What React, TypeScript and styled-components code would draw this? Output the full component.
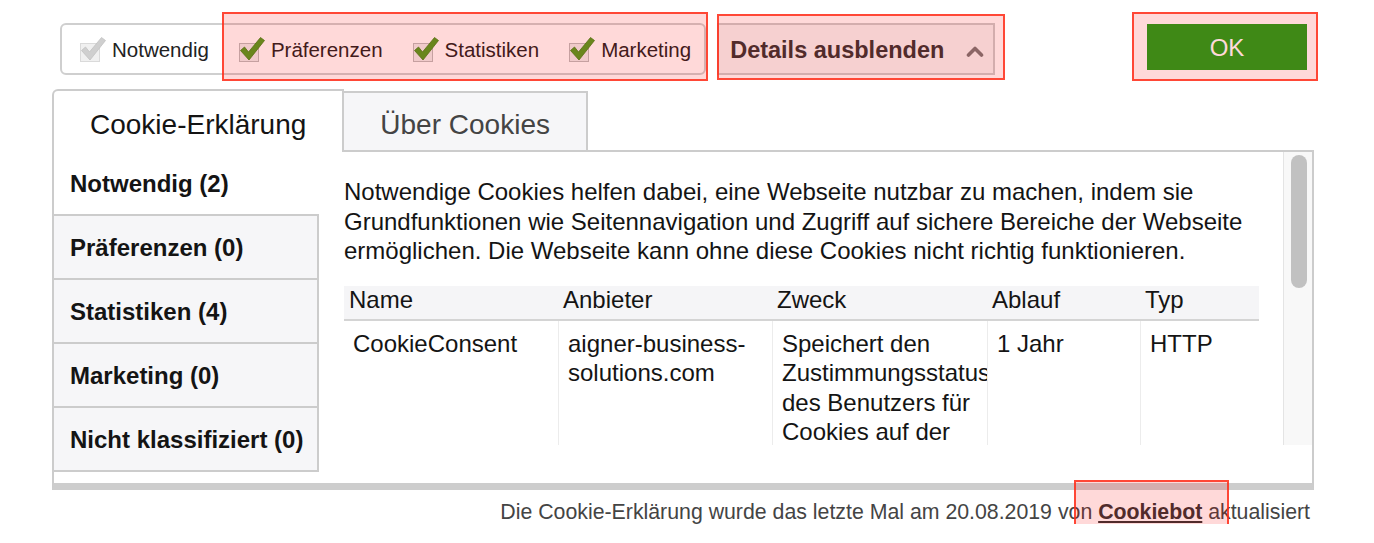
import React from "react";
import styled, { createGlobalStyle } from "styled-components";

const FONT = `"Liberation Sans", Arial, Helvetica, sans-serif`;

const GlobalStyle = createGlobalStyle`
  * { box-sizing: border-box; }
  html, body { overflow: hidden; }
  body {
    margin: 0;
    background: #ffffff;
    font-family: ${FONT};
    color: #141414;
  }
`;

const Page = styled.div`
  padding: 23px 0 0 52px;
`;

const Frame = styled.div`
  width: 1262px;
`;

const TopBar = styled.div`
  display: flex;
  align-items: flex-start;
  padding: 0 7px 0 8px;
`;

const CheckGroup = styled.div`
  display: flex;
  align-items: center;
  gap: 29px;
  height: 52px;
  padding: 2px 13px 0 17px;
  border: 2px solid #cfcfcf;
  border-radius: 6px;
  background: #ffffff;
`;

const MarkedGroup = styled.div`
  position: relative;
  display: flex;
  align-items: center;
  gap: 29px;
  align-self: stretch;
`;

const CheckItem = styled.label`
  display: flex;
  align-items: center;
  gap: 5px;
  font-size: 20.5px;
  color: #222222;
  white-space: nowrap;
`;

const Mark = styled.span<{ $t: number; $r: number; $b: number; $l: number }>`
  position: absolute;
  top: ${(p) => p.$t}px;
  right: ${(p) => p.$r}px;
  bottom: ${(p) => p.$b}px;
  left: ${(p) => p.$l}px;
  background: rgba(255, 0, 0, 0.15);
  border: 2px solid rgba(255, 45, 25, 0.85);
  pointer-events: none;
  z-index: 2;
`;

const DetailsButton = styled.button`
  position: relative;
  margin-left: 11px;
  width: 278px;
  height: 52px;
  flex: none;
  display: flex;
  align-items: center;
  padding: 3px 0 0 11px;
  border: 2px solid #cccccc;
  background: #f5f5f5;
  font-family: ${FONT};
  font-weight: bold;
  font-size: 23.5px;
  color: #333333;
  cursor: pointer;
`;

const Chevron = styled.svg`
  margin-left: 22px;
  flex: none;
`;

const OkWrap = styled.div`
  position: relative;
  margin-left: auto;
  margin-top: 1px;
`;

const OkButton = styled.button`
  width: 160px;
  height: 46px;
  padding-top: 3px;
  border: none;
  background: #1ea21b;
  color: #ffffff;
  font-family: ${FONT};
  font-size: 24px;
  cursor: pointer;
`;

const TabRow = styled.div`
  display: flex;
  align-items: flex-end;
  height: 63px;
  margin-top: 14px;
`;

const Tab = styled.div<{ $active?: boolean }>`
  height: ${(p) => (p.$active ? 63 : 61)}px;
  padding: ${(p) => (p.$active ? "18px" : "16px")} 36px 0 36px;
  font-size: 28px;
  line-height: 32px;
  white-space: nowrap;
  border: 2px solid #cccccc;
  border-bottom: ${(p) => (p.$active ? "none" : "2px solid #cccccc")};
  border-left: ${(p) => (p.$active ? "2px solid #cccccc" : "none")};
  border-radius: ${(p) => (p.$active ? "6px 0 0 0" : "0")};
  background: ${(p) => (p.$active ? "#ffffff" : "#f6f6f8")};
  color: ${(p) => (p.$active ? "#141414" : "#444444")};
`;

const TabFill = styled.div`
  flex: 1;
  height: 2px;
  background: #cccccc;
`;

const Panel = styled.div`
  display: flex;
  height: 338px;
  border: 2px solid #cccccc;
  border-top: none;
  border-bottom: 7px solid #cdcdcd;
`;

const Nav = styled.div`
  width: 265px;
  display: flex;
  flex-direction: column;
  flex: none;
`;

const NavItem = styled.div<{ $active?: boolean; $last?: boolean }>`
  height: ${(p) => (p.$active ? 62 : p.$last ? 66 : 64)}px;
  display: flex;
  align-items: center;
  padding: 2px 0 0 16px;
  font-weight: bold;
  font-size: 24px;
  color: #141414;
  white-space: nowrap;
  background: ${(p) => (p.$active ? "#ffffff" : "#f6f6f8")};
  border-top: ${(p) => (p.$active ? "none" : "2px solid #cccccc")};
  border-right: ${(p) => (p.$active ? "none" : "2px solid #cccccc")};
  border-bottom: ${(p) => (p.$last ? "2px solid #cccccc" : "none")};
`;

const ContentCol = styled.div`
  flex: 1;
  min-width: 0;
  display: flex;
  flex-direction: column;
`;

const Viewport = styled.div`
  display: flex;
  height: 293px;
`;

const ScrollBody = styled.div`
  flex: 1;
  min-width: 0;
  overflow: hidden;
  padding: 25px 24px 0 25px;
`;

const Track = styled.div`
  width: 29px;
  flex: none;
  border-left: 1px solid #e4e4e4;
  background: #f8f8f8;
  padding: 3px 0 0 7px;
`;

const Thumb = styled.div`
  width: 16px;
  height: 133px;
  border-radius: 8px;
  background: #c1c1c1;
`;

const Description = styled.p`
  margin: 0;
  font-size: 24px;
  line-height: 29.5px;
  color: #141414;
`;

const CookieTable = styled.div`
  display: grid;
  grid-template-columns: 214px 214px 215px 153px 119px;
  margin-top: 20px;
`;

const HeadCell = styled.div`
  height: 35px;
  padding: 0 0 0 5px;
  line-height: 28px;
  font-size: 24px;
  color: #141414;
  background: #f5f5f7;
  border-bottom: 2px solid #d4d4d4;
  white-space: nowrap;
`;

const Cell = styled.div<{ $first?: boolean }>`
  padding: 8px 10px 0 9px;
  font-size: 24px;
  line-height: 29.5px;
  color: #141414;
  overflow: hidden;
  border-left: ${(p) => (p.$first ? "none" : "1px solid #ececec")};
`;

const Footer = styled.div`
  margin-top: 10px;
  padding-right: 4px;
  text-align: right;
  font-size: 21.3px;
  line-height: 24px;
  color: #444444;
`;

const FooterLink = styled.a`
  position: relative;
  font-weight: bold;
  color: #333333;
  text-decoration: underline;
`;

function CheckBox({ disabled }: { disabled?: boolean }) {
  return (
    <svg width="28" height="28" viewBox="0 0 28 28" aria-hidden="true">
      <rect
        x="1.5"
        y="7.5"
        width="19"
        height="18"
        fill={disabled ? "#f0f0f0" : "#eeeeee"}
        stroke={disabled ? "#dadada" : "#bdbdbd"}
      />
      <path
        d="M2.5 14.5 L6.5 11 L10.5 16 L22.5 1.5 L26.5 4.5 L11 24 Z"
        fill={disabled ? "#cfcfcf" : "#4f9e22"}
        stroke={disabled ? "#c2c2c2" : "#3d8216"}
        strokeWidth="0.8"
        strokeLinejoin="round"
      />
    </svg>
  );
}

const navItems = [
  "Notwendig (2)",
  "Präferenzen (0)",
  "Statistiken (4)",
  "Marketing (0)",
  "Nicht klassifiziert (0)",
];

const headers = ["Name", "Anbieter", "Zweck", "Ablauf", "Typ"];

const rows = [
  [
    "CookieConsent",
    "aigner-business-solutions.com",
    "Speichert den Zustimmungsstatus des Benutzers für Cookies auf der aktuellen Domäne.",
    "1 Jahr",
    "HTTP",
  ],
];

export default function App() {
  return (
    <>
      <GlobalStyle />
      <Page>
        <Frame>
          <TopBar>
            <CheckGroup>
              <CheckItem>
                <CheckBox disabled />
                Notwendig
              </CheckItem>
              <MarkedGroup>
                <CheckItem>
                  <CheckBox />
                  Präferenzen
                </CheckItem>
                <CheckItem>
                  <CheckBox />
                  Statistiken
                </CheckItem>
                <CheckItem>
                  <CheckBox />
                  Marketing
                </CheckItem>
                <Mark $t={-15} $r={-17} $b={-8} $l={-16} />
              </MarkedGroup>
            </CheckGroup>
            <DetailsButton>
              Details ausblenden
              <Chevron width="18" height="12" viewBox="0 0 18 12" aria-hidden="true">
                <polyline
                  points="2.5,10 9,3.5 15.5,10"
                  fill="none"
                  stroke="#777777"
                  strokeWidth="3.6"
                  strokeLinecap="round"
                  strokeLinejoin="round"
                />
              </Chevron>
              <Mark $t={-11} $r={-12} $b={-7} $l={-2} />
            </DetailsButton>
            <OkWrap>
              <OkButton>OK</OkButton>
              <Mark $t={-12} $r={-11} $b={-11} $l={-15} />
            </OkWrap>
          </TopBar>

          <TabRow>
            <Tab $active>Cookie-Erklärung</Tab>
            <Tab>Über Cookies</Tab>
            <TabFill />
          </TabRow>

          <Panel>
            <Nav>
              {navItems.map((item, i) => (
                <NavItem key={item} $active={i === 0} $last={i === navItems.length - 1}>
                  {item}
                </NavItem>
              ))}
            </Nav>
            <ContentCol>
              <Viewport>
                <ScrollBody>
                  <Description>
                    Notwendige Cookies helfen dabei, eine Webseite nutzbar zu machen, indem sie
                    Grundfunktionen wie Seitennavigation und Zugriff auf sichere Bereiche der
                    Webseite ermöglichen. Die Webseite kann ohne diese Cookies nicht richtig
                    funktionieren.
                  </Description>
                  <CookieTable>
                    {headers.map((h) => (
                      <HeadCell key={h}>{h}</HeadCell>
                    ))}
                    {rows.map((row, r) =>
                      row.map((value, c) => (
                        <Cell key={`${r}-${c}`} $first={c === 0}>
                          {value}
                        </Cell>
                      ))
                    )}
                  </CookieTable>
                </ScrollBody>
                <Track>
                  <Thumb />
                </Track>
              </Viewport>
            </ContentCol>
          </Panel>

          <Footer>
            Die Cookie-Erklärung wurde das letzte Mal am 20.08.2019 von{" "}
            <FooterLink href="#">
              Cookiebot
              <Mark $t={-20} $r={-27} $b={-13} $l={-24} />
            </FooterLink>{" "}
            aktualisiert
          </Footer>
        </Frame>
      </Page>
    </>
  );
}
